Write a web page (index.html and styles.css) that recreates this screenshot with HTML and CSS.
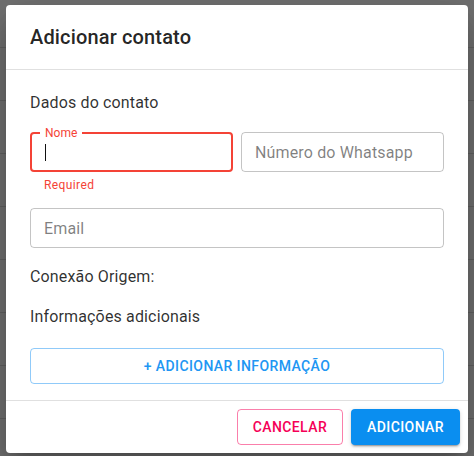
FILE: index.html
```html
<!DOCTYPE html>
<html lang="pt-BR">
<head>
  <meta charset="UTF-8">
  <meta name="viewport" content="width=device-width, initial-scale=1.0">
  <title>Adicionar contato</title>
  <link rel="stylesheet" href="styles.css">
</head>
<body>
  <div class="backdrop">
    <div class="dialog">
      <div class="dialog-title">Adicionar contato</div>

      <div class="dialog-content">
        <div class="section-title">Dados do contato</div>

        <div class="row">
          <div class="field-wrap">
            <div class="field error">
              <span class="label">Nome</span>
              <span class="caret"></span>
            </div>
            <div class="helper">Required</div>
          </div>
          <div class="field-wrap">
            <div class="field">
              <span class="placeholder">Número do Whatsapp</span>
            </div>
          </div>
        </div>

        <div class="field email">
          <span class="placeholder">Email</span>
        </div>

        <div class="text origin">Conexão Origem:</div>
        <div class="text extra">Informações adicionais</div>

        <button class="btn btn-add-info">+ Adicionar informação</button>
      </div>

      <div class="dialog-actions">
        <button class="btn btn-cancel">Cancelar</button>
        <button class="btn btn-primary">Adicionar</button>
      </div>
    </div>
  </div>
</body>
</html>
```

FILE: styles.css
```css
* {
  box-sizing: border-box;
}

html, body {
  margin: 0;
  height: 100%;
}

body {
  font-family: Roboto, "Liberation Sans", sans-serif;
  color: rgba(0, 0, 0, 0.87);
  background-color: #717171;
  background-image: repeating-linear-gradient(to bottom, transparent 0, transparent 52px, #626262 52px, #626262 53px);
  background-position: 0 -5px;
}

.backdrop {
  padding: 5px 6px;
}

.dialog {
  width: 462px;
  background: #fff;
  border-radius: 4px;
  box-shadow: 0 11px 15px -7px rgba(0,0,0,0.2), 0 24px 38px 3px rgba(0,0,0,0.14), 0 9px 46px 8px rgba(0,0,0,0.12);
}

.dialog-title {
  padding: 16px 24px;
  font-size: 20px;
  font-weight: 500;
  line-height: 32px;
  letter-spacing: 0.0075em;
  border-bottom: 1px solid #e0e0e0;
}

.dialog-content {
  padding: 21px 24px 16px;
  border-bottom: 1px solid #e0e0e0;
}

.section-title,
.text {
  font-size: 16px;
  line-height: 24px;
  letter-spacing: 0.00938em;
  color: rgba(0, 0, 0, 0.82);
}

.row {
  display: flex;
  gap: 8px;
  margin-top: 17px;
}

.field-wrap {
  flex: 1;
}

.field {
  position: relative;
  height: 40px;
  display: flex;
  align-items: center;
  padding: 0 13px;
  border: 1px solid rgba(0, 0, 0, 0.23);
  border-radius: 4px;
}

.field.error {
  border: 2px solid #f44336;
  padding: 0 13px;
}

.label {
  position: absolute;
  top: -8px;
  left: 8px;
  padding: 0 5px;
  background: #fff;
  font-size: 12px;
  line-height: 14px;
  color: #f44336;
}

.caret {
  width: 1px;
  height: 17px;
  background: #111;
}

.placeholder {
  font-size: 16px;
  color: rgba(0, 0, 0, 0.5);
  letter-spacing: 0.00938em;
}

.helper {
  margin: 3px 14px 0;
  font-size: 12px;
  line-height: 20px;
  letter-spacing: 0.03333em;
  color: #f44336;
}

.email {
  margin-top: 13px;
}

.origin {
  margin-top: 17px;
}

.extra {
  margin-top: 16px;
}

.btn {
  font-family: Roboto, "Liberation Sans", sans-serif;
  font-size: 14px;
  font-weight: 500;
  line-height: 24px;
  letter-spacing: 0.02857em;
  text-transform: uppercase;
  border-radius: 4px;
  background: none;
  cursor: pointer;
  min-width: 64px;
}

.btn-add-info {
  display: block;
  width: 100%;
  height: 36px;
  margin-top: 19px;
  padding: 5px 15px;
  color: #2196f3;
  border: 1px solid rgba(33, 150, 243, 0.5);
}

.dialog-actions {
  display: flex;
  justify-content: flex-end;
  gap: 8px;
  padding: 8px;
}

.btn-cancel {
  height: 36px;
  padding: 5px 15px;
  color: #f50057;
  border: 1px solid rgba(245, 0, 87, 0.5);
}

.btn-primary {
  height: 36px;
  padding: 6px 16px;
  color: #fff;
  background: #0a8ef0;
  border: none;
  box-shadow: 0 3px 1px -2px rgba(0,0,0,0.2), 0 2px 2px 0 rgba(0,0,0,0.14), 0 1px 5px 0 rgba(0,0,0,0.12);
}
```
